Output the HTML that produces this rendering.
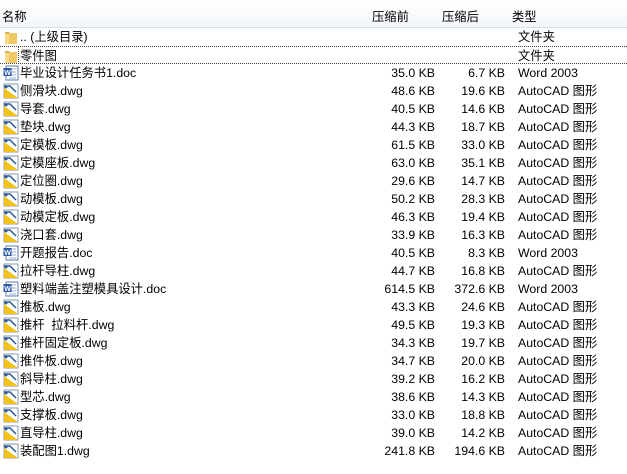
<!DOCTYPE html><html><head><meta charset="utf-8"><style>
body{margin:0;width:627px;height:474px;background:#fff;overflow:hidden;font-family:"Liberation Sans","Noto Sans CJK SC",sans-serif;font-size:12.3px;color:#000}
.hd{position:absolute;left:0;top:0;width:627px;height:27px;background:linear-gradient(#fff,#f3f6fa);border-bottom:1px solid #d5dfe8}
.hd span{position:absolute;top:7px}
.r{position:absolute;left:0;width:627px;height:18px;line-height:18px;white-space:nowrap}
.r .n{position:absolute;left:20px}
.r .a{position:absolute;right:192px}
.r .b{position:absolute;right:122px}
.r .t{position:absolute;left:518px}
.ic{position:absolute;left:3px;top:1px;width:16px;height:16px}
.foc{border-top:1px dotted #444;border-bottom:1px dotted #444;box-sizing:border-box}
.foc .fx{position:absolute;left:18px;top:-1px;bottom:-1px;border-left:1px dotted #444}
</style></head><body>
<div class="hd"><span style="left:2px">名称</span><span style="left:372px">压缩前</span><span style="left:442px">压缩后</span><span style="left:512px">类型</span></div>
<div id="rows"></div>
<svg width="0" height="0" style="position:absolute"><defs>
<symbol id="fold" viewBox="0 0 16 16"><path d="M2 3h4l1 1h7v11H2z" fill="#d9b04a"/><path d="M2 5h4v10H2z" fill="#f6dc8a"/><path d="M6 4h8v11H6z" fill="#efc964"/></symbol>
<symbol id="doc" viewBox="0 0 16 16"><rect x="3" y="1" width="12" height="14" fill="#fff" stroke="#5a7fb5"/><path d="M6 4h7M6 7h7M6 10h7M6 13h7" stroke="#9bb3d6"/><rect x="0.5" y="3" width="8" height="8" fill="#2a5aa8"/><text x="1.3" y="10" font-size="7" font-weight="bold" fill="#fff" font-family="Liberation Sans">W</text></symbol>
<symbol id="dwg" viewBox="0 0 16 16"><rect x="1" y="1" width="14" height="14" fill="#fff" stroke="#8899aa"/><path d="M1 5l14 10H1z" fill="#f3c21a"/><path d="M1 3h6l6 6" stroke="#2a5a9a" stroke-width="1.5" fill="none"/><circle cx="3" cy="4" r="1.5" fill="#2a5a9a"/></symbol>
</defs></svg>
<script>
const d=[["fold",".. (上级目录)","","","文件夹"],["fold","零件图","","","文件夹"],["doc","毕业设计任务书1.doc","35.0 KB","6.7 KB","Word 2003"],
["dwg","侧滑块.dwg","48.6 KB","19.6 KB"],["dwg","导套.dwg","40.5 KB","14.6 KB"],["dwg","垫块.dwg","44.3 KB","18.7 KB"],["dwg","定模板.dwg","61.5 KB","33.0 KB"],["dwg","定模座板.dwg","63.0 KB","35.1 KB"],["dwg","定位圈.dwg","29.6 KB","14.7 KB"],["dwg","动模板.dwg","50.2 KB","28.3 KB"],["dwg","动模定板.dwg","46.3 KB","19.4 KB"],["dwg","浇口套.dwg","33.9 KB","16.3 KB"],["doc","开题报告.doc","40.5 KB","8.3 KB","Word 2003"],["dwg","拉杆导柱.dwg","44.7 KB","16.8 KB"],["doc","塑料端盖注塑模具设计.doc","614.5 KB","372.6 KB","Word 2003"],["dwg","推板.dwg","43.3 KB","24.6 KB"],["dwg","推杆  拉料杆.dwg","49.5 KB","19.3 KB"],["dwg","推杆固定板.dwg","34.3 KB","19.7 KB"],["dwg","推件板.dwg","34.7 KB","20.0 KB"],["dwg","斜导柱.dwg","39.2 KB","16.2 KB"],["dwg","型芯.dwg","38.6 KB","14.3 KB"],["dwg","支撑板.dwg","33.0 KB","18.8 KB"],["dwg","直导柱.dwg","39.0 KB","14.2 KB"],["dwg","装配图1.dwg","241.8 KB","194.6 KB"]];
let h="";d.forEach((r,i)=>{h+=`<div class="r${i==1?' foc':''}" style="top:${28+18*i}px">${i==1?'<div class="fx"></div>':''}<svg class="ic"><use href="#${r[0]}"/></svg><span class="n">${r[1].replace(/ /g,'&nbsp;')}</span><span class="a">${r[2]}</span><span class="b">${r[3]}</span><span class="t">${r[4]||"AutoCAD 图形"}</span></div>`});
document.getElementById("rows").innerHTML=h;
</script>
</body></html>
